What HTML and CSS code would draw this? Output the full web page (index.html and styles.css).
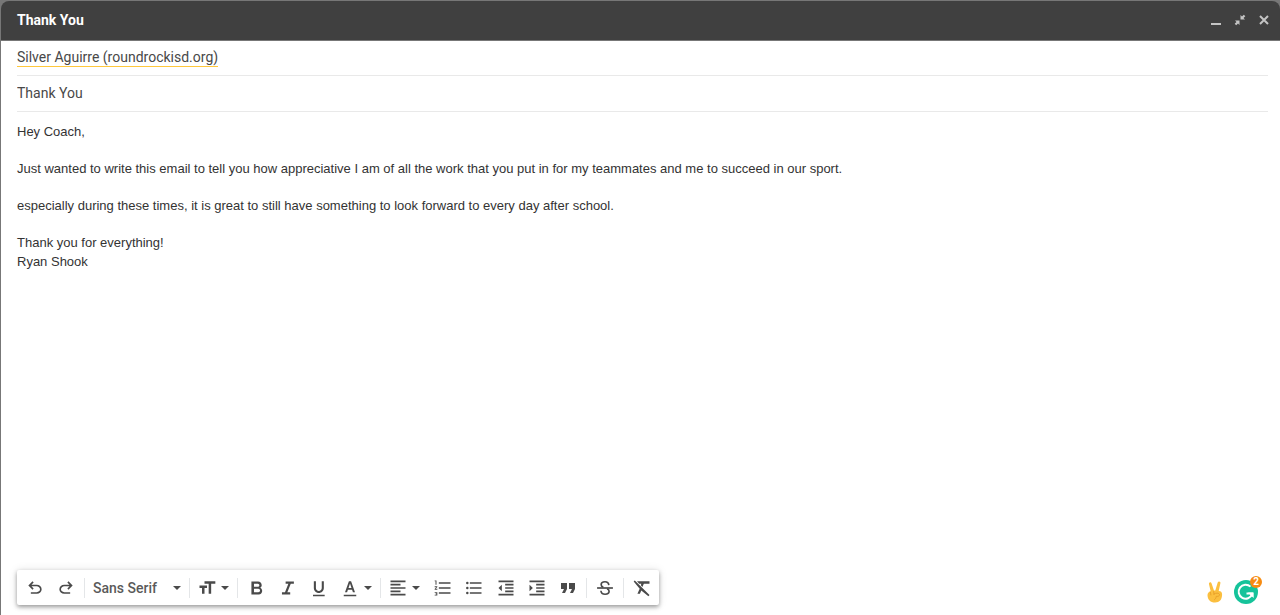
FILE: index.html
```html
<!DOCTYPE html>
<html lang="en">
<head>
<meta charset="utf-8">
<title>Thank You</title>
<link rel="stylesheet" href="styles.css">
</head>
<body>
<main class="compose">
  <header class="titlebar">
    <h1 class="title">Thank You</h1>
    <div class="window-actions">
      <button class="window-button" type="button" aria-label="Minimize"><svg viewBox="0 0 12 12"><path d="M1 9h10v2H1z"/></svg></button>
      <button class="window-button" type="button" aria-label="Exit full screen"><svg viewBox="0 0 12 12"><path d="M6.500 1v4.500H11L9.500 4 11.300 2.200 9.800.700 8 2.500zM1 6.500h4.500V11L4 9.500 2.200 11.300.700 9.800 2.500 8z"/></svg></button>
      <button class="window-button" type="button" aria-label="Close"><svg viewBox="0 0 12 12"><path class="cross" d="M2 2l8 8M10 2l-8 8"/></svg></button>
    </div>
  </header>

  <form class="form">
    <div class="row"><button class="recipient" type="button">Silver Aguirre (roundrockisd.org)</button></div>
    <div class="row"><input class="subject" type="text" aria-label="Subject" value="Thank You"></div>
    <div class="message" contenteditable="true" role="textbox" aria-multiline="true" aria-label="Message body" spellcheck="false">
      <p>Hey Coach,</p>
      <p>Just wanted to write this email to tell you how appreciative I am of all the work that you put in for my teammates and me to succeed in our sport.</p>
      <p>especially during these times, it is great to still have something to look forward to every day after school.</p>
      <p>Thank you for everything!<br>Ryan Shook</p>
    </div>

    <footer class="footer">
      <div class="toolbar" role="toolbar" aria-label="Formatting options">
        <div class="group history">
          <button class="tool" type="button" aria-label="Undo"><svg class="icon" viewBox="0 -960 960 960"><path d="M280-200v-80h284q63 0 109.500-40T720-420q0-60-46.500-100T564-560H312l104 104-56 56-200-200 200-200 56 56-104 104h252q97 0 166.500 63T800-420q0 94-69.500 157T564-200H280Z"/></svg></button>
          <button class="tool" type="button" aria-label="Redo"><svg class="icon" viewBox="0 -960 960 960"><path d="M396-200q-97 0-166.500-63T160-420q0-94 69.500-157T396-640h252L544-744l56-56 200 200-200 200-56-56 104-104H396q-63 0-109.500 40T240-420q0 60 46.500 100T396-280h284v80H396Z"/></svg></button>
        </div>
        <div class="group font">
          <select class="font-select" aria-label="Font"><option>Sans Serif</option></select>
          <svg class="caret" viewBox="0 0 8 4"><path d="M0 0h8L4 4z"/></svg>
        </div>
        <div class="group size">
          <button class="tool menu" type="button" aria-label="Size"><svg class="icon" viewBox="0 0 24 24"><path d="M9 4v3h5v12h3V7h5V4H9zm-6 8h3v7h3v-7h3V9H3v3z"/></svg><svg class="caret" viewBox="0 0 8 4"><path d="M0 0h8L4 4z"/></svg></button>
        </div>
        <div class="group style">
          <button class="tool" type="button" aria-label="Bold"><svg class="icon medium" viewBox="-1 -1 24 24"><path d="M15.600 10.790c.970-.670 1.650-1.770 1.650-2.790 0-2.260-1.750-4-4-4H6v14h8.040c2.090 0 3.710-1.700 3.710-3.790 0-1.520-.860-2.820-2.150-3.420zM8.800 6.300h4.200c1 0 1.700.8 1.700 1.700s-.7 1.700-1.700 1.700H8.800zm4.700 9.400H8.800v-3.800h4.700c1.100 0 1.900.9 1.900 1.900s-.8 1.900-1.900 1.900z"/></svg></button>
          <button class="tool" type="button" aria-label="Italic"><svg class="icon medium" viewBox="-1 -1 24 24"><path d="M9.500 4v2.300h3L8.800 15.700H5.500V18h9v-2.300h-3.100l3.700-9.400h3.400V4z"/></svg></button>
          <button class="tool" type="button" aria-label="Underline"><svg class="icon" viewBox="-1 -1 24 24"><path d="M12 17c3.310 0 6-2.690 6-6V3h-2.500v8c0 1.930-1.570 3.500-3.500 3.500S8.500 12.930 8.500 11V3H6v8c0 3.310 2.690 6 6 6zm-7 2v2h14v-2H5z"/></svg></button>
          <button class="tool menu" type="button" aria-label="Text color"><svg class="icon" viewBox="0 -1 24 24"><path d="M10.700 3L6 16h2.500l1-3h5l1 3H18L13.300 3zm-.5 7.900L12 5.600l1.800 5.300zM4.500 19v2h15v-2z"/></svg><svg class="caret" viewBox="0 0 8 4"><path d="M0 0h8L4 4z"/></svg></button>
        </div>
        <div class="group layout">
          <button class="tool menu align" type="button" aria-label="Align"><svg class="icon" viewBox="0 0 24 24"><path d="M3 3h18v2H3zm0 4h12v2H3zm0 4h18v2H3zm0 4h12v2H3zm0 4h18v2H3z"/></svg><svg class="caret" viewBox="0 0 8 4"><path d="M0 0h8L4 4z"/></svg></button>
          <button class="tool" type="button" aria-label="Numbered list"><svg class="icon" viewBox="0 0 24 24"><path d="M2 18h2v.5H3v1h1v.5H2v1h3.200v-4H2v1zm1-10h1.200V3H2v1h1v4zm-1 3h1.800L2 13.100v.9h3.200v-1h-2L5.200 10.900V10H2v1zm5-6v2h14V5H7zm0 14h14v-2H7v2zm0-6h14v-2H7v2z"/></svg></button>
          <button class="tool" type="button" aria-label="Bulleted list"><svg class="icon" viewBox="0 0 24 24"><path d="M7 5h14v2H7zm0 6h14v2H7zm0 6h14v2H7z"/><circle cx="4" cy="6" r="1.500"/><circle cx="4" cy="12" r="1.500"/><circle cx="4" cy="18" r="1.500"/></svg></button>
          <button class="tool" type="button" aria-label="Indent less"><svg class="icon" viewBox="0 0 24 24"><path d="M11 17h10v-2H11v2zm-8-5l4 4V8l-4 4zm0 9h18v-2H3v2zM3 3v2h18V3H3zm8 6h10V7H11v2zm0 4h10v-2H11v2z"/></svg></button>
          <button class="tool" type="button" aria-label="Indent more"><svg class="icon" viewBox="0 0 24 24"><path d="M3 21h18v-2H3v2zM3 8v8l4-4-4-4zm8 9h10v-2H11v2zM3 3v2h18V3H3zm8 6h10V7H11v2zm0 4h10v-2H11v2z"/></svg></button>
          <button class="tool" type="button" aria-label="Quote"><svg class="icon large" viewBox="0 0 24 24"><path d="M6 17h3l2-4V7H5v6h3zm8 0h3l2-4V7h-6v6h3z"/></svg></button>
        </div>
        <div class="group strike">
          <button class="tool" type="button" aria-label="Strikethrough"><svg class="icon" viewBox="0 -1 24 24"><path d="M2.500 10h19v2h-19z"/><path class="stroke" d="M16.600 7.500C16.300 4.800 14.500 3.500 12 3.500 9.300 3.500 7.400 5 7.400 7c0 1.500.9 2.400 2.600 3.100M14.500 12c1.500.7 2.400 1.500 2.400 2.900 0 2.200-2.100 3.600-4.800 3.600-2.900 0-4.800-1.500-5-4.200"/></svg></button>
        </div>
        <div class="group clear">
          <button class="tool" type="button" aria-label="Remove formatting"><svg class="icon" viewBox="0 0 24 24"><path d="M3.270 3L2 4.270l7.200 8.500L6.500 19h3l1.600-4L19.700 22 21 20.500 4 3.500zM6 4l2.600 3h2.600l-.6 1.700 1.900 2.100L14.200 7H21V4z"/></svg></button>
        </div>
      </div>

      <div class="assistants">
        <button class="assistant" type="button" aria-label="Tone detector">
          <svg class="hand" viewBox="0 0 18 24"><path fill="#fbbf3f" d="M4.600 11L3 4.300C2.600 2.200 5 1.600 5.600 3.500L8 10.500h1.300l2.400-8c.6-1.900 3.200-1.200 2.700.8L12.700 11c2.500.2 3.500 1.500 3.400 3.800-.2 5-2.500 7.700-7 7.700-4.700 0-7.500-2.800-7.600-7.300 0-2 1.200-3.400 3.100-4.200z"/><path fill="none" stroke="#e59a26" stroke-width=".8" stroke-linecap="round" d="M4.500 12.500l.4 2.500M7.700 11.500l.3 3M8 14c2-1.400 4.800-1.100 5.500.4.500 1.400-1.200 2.100-3.300 2-.1 1.500-.7 2.500-1.700 3.300"/></svg>
        </button>
        <button class="assistant grammar" type="button" aria-label="Grammar suggestions, 2">
          <svg class="badge-icon" viewBox="0 0 24 24"><circle cx="12" cy="12" r="12" fill="#15c39a"/><path fill="none" stroke="#fff" stroke-width="2" d="M16.500 6.600A7 7 0 1 0 18.200 14.200M12.500 13.500h6.500"/><path fill="#fff" d="M14 12.500h5.700V18l-2-1.700z"/></svg>
          <span class="count">2</span>
        </button>
      </div>
    </footer>
  </form>
</main>
</body>
</html>
```
FILE: styles.css
```css
* {
  box-sizing: border-box;
}

body {
  margin: 0;
  background: #777;
  font-family: Roboto, "Liberation Sans", sans-serif;
  color: #484848;
}

button,
input,
select {
  margin: 0;
  padding: 0;
  border: 0;
  background: none;
  color: inherit;
  font: inherit;
}

.compose {
  display: flex;
  flex-direction: column;
  min-height: 100vh;
  padding: 1px 0 0 1px;
}

.titlebar {
  display: flex;
  align-items: center;
  justify-content: space-between;
  height: 40px;
  padding: 0 10px 2px 16px;
  border-bottom: 1px solid #777;
  border-radius: 8px 8px 0 0;
  background: #404040;
  color: #fff;
}

.title {
  margin: 0;
  font-size: 14px;
  line-height: 20px;
  font-weight: 700;
}

.window-actions {
  display: flex;
  gap: 12px;
}

.window-button {
  display: flex;
  width: 12px;
  height: 12px;
}

.window-button svg {
  width: 12px;
  height: 12px;
  fill: #c4c4c4;
}

.cross {
  stroke: #c4c4c4;
  stroke-width: 2;
}

.form {
  display: flex;
  flex: 1;
  flex-direction: column;
  padding: 0 12px 10px 16px;
  background: #fff;
}

.row {
  display: flex;
  align-items: center;
  height: 35px;
  padding-bottom: 2px;
  border-bottom: 1px solid #e9e9e9;
}

.row + .row {
  height: 36px;
}

.recipient {
  border-bottom: 1px solid #ffc83c;
  font-size: 14px;
  line-height: 18px;
}

.subject {
  width: 100%;
  font-size: 14px;
  line-height: 20px;
}

.message {
  flex: 1;
  padding-top: 10px;
  outline: 0;
  color: #333;
  font-family: "Liberation Sans", Arial, sans-serif;
  font-size: 13px;
  line-height: 19px;
}

.message p {
  margin: 0 0 18px;
}

.footer {
  display: flex;
  align-items: center;
  justify-content: space-between;
}

.toolbar {
  display: flex;
  align-items: center;
  height: 35px;
  padding-left: 2px;
  border-radius: 2px;
  background: #fff;
  box-shadow: 0 2px 4px rgba(0, 0, 0, 0.36), 0 0 10px rgba(0, 0, 0, 0.1);
  color: #4a4a4a;
}

.group {
  display: flex;
  align-items: center;
  height: 20px;
  border-right: 1px solid #e4e6e8;
}

.history {
  width: 66px;
  padding-right: 2px;
}

.font {
  width: 105px;
  padding: 0 8px;
}

.font-select {
  flex: 1;
  appearance: none;
  font-size: 14px;
  line-height: 20px;
  font-weight: 500;
  color: #5a5a5a;
}

.size {
  width: 48px;
  padding-right: 2px;
}

.style {
  width: 143px;
  padding: 0 1px 0 2px;
}

.layout {
  width: 206px;
  padding-right: 2px;
}

.strike {
  width: 37px;
}

.clear {
  width: 35px;
  border-right: 0;
}

.tool {
  display: flex;
  flex: 1;
  align-items: center;
  justify-content: center;
}

.menu {
  flex: 0 0 46px;
  gap: 4px;
}

.size .menu {
  flex: 1;
}

.icon {
  flex: none;
  width: 20px;
  height: 20px;
  fill: currentColor;
}

.medium {
  width: 22px;
  height: 22px;
}

.large {
  width: 24px;
  height: 24px;
}

.stroke {
  fill: none;
  stroke: currentColor;
  stroke-width: 2;
}

.caret {
  flex: none;
  width: 8px;
  height: 4px;
  fill: currentColor;
}

.assistants {
  display: flex;
  align-items: center;
  gap: 10px;
  padding: 8px 10px 0 0;
}

.assistant {
  display: flex;
  position: relative;
}

.hand {
  width: 18px;
  height: 24px;
}

.badge-icon {
  width: 24px;
  height: 24px;
}

.count {
  position: absolute;
  top: -4px;
  right: -4px;
  width: 12px;
  height: 12px;
  border-radius: 50%;
  background: #f78b12;
  color: #fff;
  font-size: 10px;
  line-height: 12px;
  font-weight: 700;
  text-align: center;
}
```
